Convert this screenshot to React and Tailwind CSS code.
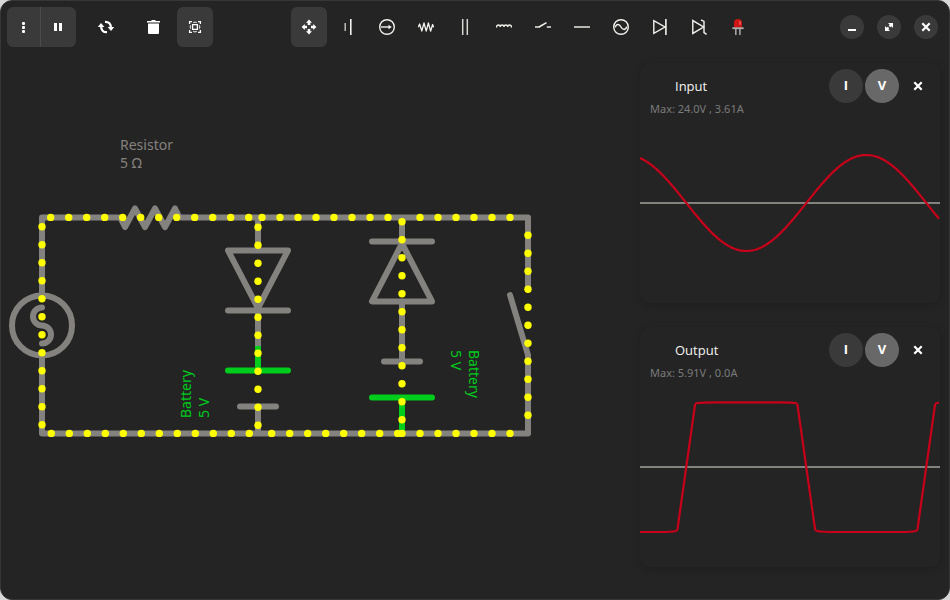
const WIRE = "#84827f";
const GREEN = "#00cc1b";

function Icon({ children }) {
  return (
    <svg width="16" height="16" viewBox="0 0 16 16" fill="none" stroke="#f2f2ef" strokeWidth="1.4" aria-hidden="true">
      {children}
    </svg>
  );
}

const tools = [
  {
    name: "Battery",
    icon: (
      <Icon>
        <path d="M5.200 4v8" stroke="#c8c8c4" />
        <path d="M10.8 0v16" strokeWidth="1.6" />
      </Icon>
    ),
  },
  {
    name: "Current source",
    icon: (
      <Icon>
        <circle cx="8" cy="8" r="7.3" />
        <path d="M2 8h9" />
        <path d="M9.5 5.8 12.8 8l-3.3 2.2z" fill="#f2f2ef" stroke="none" />
      </Icon>
    ),
  },
  {
    name: "Resistor",
    icon: (
      <Icon>
        <path d="M.3 8.300 1.600 5l2.200 7L6 4l2.200 8.200L10.400 4l2.200 8.200L14.600 5.500l1 2.800" strokeLinejoin="round" strokeWidth="1.3" />
      </Icon>
    ),
  },
  {
    name: "Capacitor",
    icon: (
      <Icon>
        <path d="M5.7 0v16M10.3 0v16" stroke="#d6d6d2" strokeWidth="1.5" />
      </Icon>
    ),
  },
  {
    name: "Inductor",
    icon: (
      <Icon>
        <path d="M.6 8.500V7.500a1.900 1.900 0 0 1 3.700 0v.5v-.5A1.900 1.900 0 0 1 8 7.500v.5v-.5a1.900 1.900 0 0 1 3.700 0v.5v-.5a1.900 1.900 0 0 1 3.700 0v1" />
      </Icon>
    ),
  },
  {
    name: "Switch",
    icon: (
      <Icon>
        <path d="M0 8h4.6M11.8 8H16" stroke="#b5b5b1" strokeWidth="1.8" />
        <path d="M4 8l7.5-4.4" strokeWidth="1.5" />
      </Icon>
    ),
  },
  {
    name: "Wire",
    icon: (
      <Icon>
        <path d="M0 8h16" stroke="#b5b5b1" strokeWidth="2" />
      </Icon>
    ),
  },
  {
    name: "AC source",
    icon: (
      <Icon>
        <circle cx="8" cy="8" r="7.3" />
        <path d="M2.3 8.3C3.2 4.8 6.2 4.6 8 8s4.8 3.2 5.7-.3" />
      </Icon>
    ),
  },
  {
    name: "Diode",
    icon: (
      <Icon>
        <path d="M1.8 1.6v12.8L13 8z" />
        <path d="M13.9 0v16" strokeWidth="1.6" />
      </Icon>
    ),
  },
  {
    name: "Zener diode",
    icon: (
      <Icon>
        <path d="M1.8 1.6v12.8L12.6 8z" />
        <path d="M10 .8l3 1.6v11.2l2.6 1.8" />
      </Icon>
    ),
  },
  {
    name: "LED",
    icon: (
      <Icon>
        <path d="M5.8 10v6M9.9 10v6" stroke="#a3a3a0" strokeWidth="1.6" />
        <path d="M4 8.5V3.8a4 3.8 0 0 1 8 0v4.700z" fill="#cf1515" stroke="none" />
        <path d="M10 2.2v3.6" stroke="#f08a80" strokeWidth="1" />
        <path d="M2.4 9.2h11.2" stroke="#b0b0ac" strokeWidth="1.8" />
      </Icon>
    ),
  },
];

function ToolButton({ label, active, children }) {
  return (
    <button
      type="button"
      aria-label={label}
      className={`flex h-10 w-9 items-center justify-center rounded-md ${active ? "bg-[#3a3a3a]" : ""}`}
    >
      {children}
    </button>
  );
}

function WindowButton({ label, children }) {
  return (
    <button type="button" aria-label={label} className="flex size-6 items-center justify-center rounded-full bg-[#3a3a3a]">
      {children}
    </button>
  );
}

function Cross() {
  return (
    <svg width="16" height="16" viewBox="0 0 16 16" fill="none" stroke="#fff" strokeWidth="2.2" aria-hidden="true">
      <path d="M4.3 4.3l7.4 7.4M11.7 4.3l-7.4 7.4" />
    </svg>
  );
}

function Toolbar() {
  return (
    <header className="flex h-[52px] items-center justify-between pr-[11px] pl-1.5">
      <div className="flex items-center">
        <div className="flex overflow-hidden rounded-md bg-[#3a3a3a]">
          <button
            type="button"
            aria-label="Menu"
            className="flex h-10 w-[34px] items-center justify-center border-r border-[#4b4b4b] pr-px"
          >
            <svg width="16" height="16" viewBox="0 0 16 16" fill="#fff" aria-hidden="true">
              <rect x="7" y="3" width="3" height="3" rx="1" />
              <rect x="7" y="7" width="3" height="3" rx="1" />
              <rect x="7" y="11" width="3" height="3" rx="1" />
            </svg>
          </button>
          <button type="button" aria-label="Pause" className="flex h-10 w-[35px] items-center justify-center pr-px">
            <svg width="16" height="16" viewBox="0 0 16 16" fill="#fff" aria-hidden="true">
              <path d="M4 4h3v8H4zM9 4h3v8H9z" />
            </svg>
          </button>
        </div>
        <div className="ml-3 flex gap-[11px]">
          <ToolButton label="Restart">
            <svg width="16" height="16" viewBox="0 0 16 16" fill="none" stroke="#fff" strokeWidth="2.2" aria-hidden="true">
              <path d="M9 13.200C5.200 13.400 3 11 3.100 7M7 2.800c3.800-.2 6 2.200 5.900 6.200" />
              <path d="M-.2 8 3 4l3.400 4zM9.600 8h6.600L13 12z" fill="#fff" stroke="none" />
            </svg>
          </ToolButton>
          <ToolButton label="Delete">
            <svg width="16" height="16" viewBox="0 0 16 16" fill="#fff" aria-hidden="true">
              <path d="M2 2h4l1-1h3l1 1h4v1.500H2zM3 4.500h11V14q0 1-1 1H4q-1 0-1-1z" />
            </svg>
          </ToolButton>
        </div>
        <div className="ml-1.5">
          <ToolButton label="Fit to view" active>
            <svg width="16" height="16" viewBox="0 0 16 16" fill="none" stroke="#fff" strokeWidth="1.3" aria-hidden="true">
              <path d="M2.600 5V2.600H5M11 2.600h2.400V5M13.400 11v2.400H11M5 13.400H2.600V11" />
              <path d="M5.600 5.600h4.800v4.800H5.600z" />
              <path
                d="M6.200 3.700Q8 2.700 9.800 3.700M6.200 12.300Q8 13.300 9.800 12.300M3.700 6.200Q2.700 8 3.700 9.800M12.300 6.200Q13.300 8 12.300 9.800"
                stroke="#cfcfcf"
              />
            </svg>
          </ToolButton>
        </div>
      </div>

      <div className="flex gap-[3px]">
        <ToolButton label="Move" active>
          <svg width="16" height="16" viewBox="0 0 16 16" fill="#fff" aria-hidden="true">
            <path d="M8 .6l3 3.200H9.300V6H6.700V3.800H5zM8 15.400l3-3.200H9.300V10H6.700v2.200H5zM.6 8l3.200-3v1.700H6v2.600H3.800V11zM15.400 8l-3.200-3v1.700H10v2.600h2.200V11z" />
          </svg>
        </ToolButton>
        {tools.map((tool) => (
          <ToolButton key={tool.name} label={tool.name}>
            {tool.icon}
          </ToolButton>
        ))}
      </div>

      <div className="flex gap-[13px] pl-1.5">
        <WindowButton label="Minimize">
          <svg width="16" height="16" viewBox="0 0 16 16" fill="#fff" aria-hidden="true">
            <path d="M4 10h8v2H4z" />
          </svg>
        </WindowButton>
        <WindowButton label="Restore">
          <svg width="16" height="16" viewBox="0 0 16 16" fill="#fff" aria-hidden="true">
            <path d="M7 4h5v5l-1.700-1.700-1 1L7.700 6.700l1-1zM4 7l1.700 1.700 1-1 1.600 1.600-1 1L9 12H4z" />
          </svg>
        </WindowButton>
        <WindowButton label="Close">
          <Cross />
        </WindowButton>
      </div>
    </header>
  );
}

const row = (start, count, y) => Array.from({ length: count }, (_, i) => [start + i * 18, y]);
const column = (x, start, count) => Array.from({ length: count }, (_, i) => [x, start + i * 18]);

const charges = [
  ...row(50.7, 12, 217.4),
  ...row(262, 8, 217.4),
  ...row(420, 6, 217.4),
  ...row(51.3, 12, 433.4),
  ...row(271.7, 8, 433.4),
  ...row(402, 7, 433.4),
  ...column(42, 226.7, 12),
  ...column(258, 227.3, 12),
  ...column(402, 221.7, 12),
  ...column(528, 235.3, 11),
];

function Circuit() {
  return (
    <svg
      width="600"
      height="500"
      viewBox="1 53 600 500"
      className="block shrink-0 font-['Noto_Sans',sans-serif] text-sm"
      role="img"
      aria-label="Circuit diagram"
    >
      <g fill="none" stroke={WIRE} strokeWidth="6" strokeLinecap="round" strokeLinejoin="round">
        <path d="M42 295V217.400H120M180 217.400H528V289M528 355V433.400H42V356" strokeLinecap="butt" />
        <path d="M121 219l4 8 10-18.500 10 18.500 10-18.500 10 18.500 10-18.500 4 8" />
        <circle cx="42" cy="325.400" r="30" />
        <path d="M42 307.400a9 9 0 0 0 0 18a9 9 0 0 1 0 18" />

        <path d="M258 217.400V250.400" strokeLinecap="butt" />
        <path d="M228 250.400H288L258 308zM228 310.400H288" />
        <path d="M258 310.400V346M258 406.400V433.400" strokeLinecap="butt" />
        <path d="M240 406.400H276" />

        <path d="M402 217.400V241.400" strokeLinecap="butt" />
        <path d="M372 241.400H432M402 243.500L372 301.400H432z" />
        <path d="M402 301.400V361.400" strokeLinecap="butt" />
        <path d="M384 361.400H420" />

        <path d="M510 295L528 355" />
      </g>
      <g fill="none" stroke={GREEN} strokeWidth="6">
        <path d="M258 346V370.400M402 397.400V433.400" />
        <path d="M228 370.400H288M372 397.400H432" strokeLinecap="round" />
      </g>
      <g fill="#ffff00">
        {charges.map(([x, y]) => (
          <circle key={`${x}-${y}`} cx={x} cy={y} r="3.700" />
        ))}
      </g>
      <g fill={WIRE}>
        <text x="120" y="150">Resistor</text>
        <text x="120" y="168">5 Ω</text>
      </g>
      <g fill={GREEN}>
        <g transform="translate(191 418) rotate(-90)">
          <text>Battery</text>
          <text y="18">5 V</text>
        </g>
        <g transform="translate(469 350) rotate(90)">
          <text>Battery</text>
          <text y="18">5 V</text>
        </g>
      </g>
    </svg>
  );
}

const sine = Array.from({ length: 300 }, (_, x) => {
  const y = 140 + 48 * Math.sin(((x - 46.3) * Math.PI) / 120);
  return `${x},${y.toFixed(2)}`;
}).join(" ");

const clipped =
  "M0 205H20Q32 205 36 204Q37 204 37.500 202L55 78Q55.500 76 57 76Q62 75.300 75 75.300H140Q152 75.300 156 76Q157 76 157.500 78L175 202Q175.500 204 177 204Q182 205 195 205H260Q272 205 276 204Q277 204 277.500 202L295 78Q295.500 76 297 76L299 75.600";

function Scope({ title, reading, trace }) {
  return (
    <section className="rounded-[10px] bg-[#242424] shadow-[0_2px_8px_rgba(0,0,0,0.18)]">
      <div className="flex items-center gap-0.5 pt-1.5 pr-[5px] pl-[35px] font-['Open_Sans',sans-serif] text-[13px]">
        <h2 className="flex-1 pt-px text-[#f4f4f4]">{title}</h2>
        <button type="button" className="size-[34px] rounded-full bg-[#3a3a3a] font-bold text-white">
          I
        </button>
        <button type="button" className="size-[34px] rounded-full bg-[#686868] font-bold text-white">
          V
        </button>
        <button type="button" aria-label={`Close ${title}`} className="flex size-[34px] items-center justify-center">
          <Cross />
        </button>
      </div>
      <p className="pl-2.5 text-[11px] leading-3 text-[#7b7b7b]">{reading}</p>
      <svg viewBox="0 52 300 188" className="block w-full" fill="none" role="img" aria-label={`${title} waveform`}>
        <path d="M0 140H300" stroke={WIRE} strokeWidth="2" />
        <path d={trace} stroke="#c80019" strokeWidth="2.200" />
      </svg>
    </section>
  );
}

export default function App() {
  return (
    <div className="flex min-h-screen bg-[#d8d8d8] font-['Noto_Sans',sans-serif]">
      <div className="flex flex-1 flex-col rounded-xl border border-[#363636] bg-[#242424]">
        <Toolbar />
        <main className="flex flex-1">
          <div className="min-w-0 flex-1 overflow-hidden">
            <Circuit />
          </div>
          <aside className="flex w-[309px] shrink-0 flex-col gap-6 pt-2.5 pr-[9px]">
            <Scope title="Input" reading="Max: 24.0V , 3.61A" trace={`M${sine}`} />
            <Scope title="Output" reading="Max: 5.91V , 0.0A" trace={clipped} />
          </aside>
        </main>
      </div>
    </div>
  );
}
